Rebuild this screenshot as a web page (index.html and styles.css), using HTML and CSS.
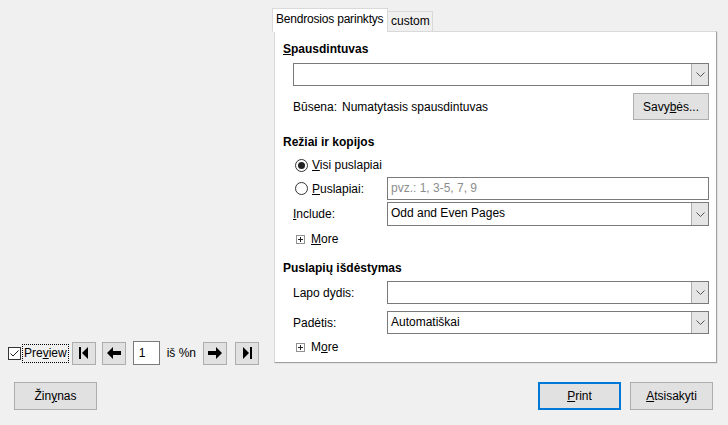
FILE: index.html
```html
<!DOCTYPE html>
<html>
<head>
<meta charset="utf-8">
<link rel="stylesheet" href="styles.css">
</head>
<body>
<div class="main">
  <div class="preview-col">
    <div class="navbar">
      <div class="chk">
        <svg class="box" width="13" height="13" viewBox="0 0 13 13"><rect x="0.5" y="0.5" width="12" height="12" fill="#fff" stroke="#333"/><path d="M2.5 6.5 L5 9 L10.5 3.5" fill="none" stroke="#222" stroke-width="1"/></svg>
        <span class="focus">Pre<u>v</u>iew</span>
      </div>
      <div class="nav first"><svg width="12" height="12" viewBox="0 0 12 12"><rect x="1" y="0" width="2" height="12"/><path d="M10 0 L10 12 L4 6 Z"/></svg></div>
      <div class="nav prev"><svg width="14" height="12" viewBox="0 0 14 12"><path d="M0 6 L6 0 L6 4 L14 4 L14 8 L6 8 L6 12 Z"/></svg></div>
      <div class="pagebox">1</div>
      <span class="of">iš %n</span>
      <div class="nav next"><svg width="14" height="12" viewBox="0 0 14 12"><path d="M14 6 L8 0 L8 4 L0 4 L0 8 L8 8 L8 12 Z"/></svg></div>
      <div class="nav last"><svg width="12" height="12" viewBox="0 0 12 12"><path d="M2 0 L2 12 L8 6 Z"/><rect x="9" y="0" width="2" height="12"/></svg></div>
    </div>
  </div>
  <div class="tabs-col">
    <div class="tabs">
      <div class="tab active">Bendrosios parinktys</div>
      <div class="tab">custom</div>
    </div>
    <div class="panel">
      <div class="title t1"><u>S</u>pausdintuvas</div>
      <div class="combo wide c1"><span class="val"></span><span class="drop"><svg width="9" height="5" viewBox="0 0 9 5"><path d="M0.5 0.5 L4.5 4.5 L8.5 0.5" fill="none" stroke="#555"/></svg></span></div>
      <div class="status">
        <span class="lbl-status">Būsena:</span>
        <span class="status-val">Numatytasis spausdintuvas</span>
        <div class="btn props">Savy<u>b</u>ės...</div>
      </div>
      <div class="title t2">Režiai ir kopijos</div>
      <div class="radio-row r1">
        <svg class="radio" width="13" height="13" viewBox="0 0 13 13"><circle cx="6.5" cy="6.5" r="6" fill="#fff" stroke="#333"/><circle cx="6.5" cy="6.5" r="3.5" fill="#222"/></svg>
        <span><u>V</u>isi puslapiai</span>
      </div>
      <div class="field-row r2">
        <div class="lbl radio-lbl">
          <svg class="radio" width="13" height="13" viewBox="0 0 13 13"><circle cx="6.5" cy="6.5" r="6" fill="#fff" stroke="#333"/></svg>
          <span><u>P</u>uslapiai:</span>
        </div>
        <div class="textbox"><span class="ph">pvz.: 1, 3-5, 7, 9</span></div>
      </div>
      <div class="field-row r3">
        <div class="lbl"><u>I</u>nclude:</div>
        <div class="combo"><span class="val">Odd and Even Pages</span><span class="drop"><svg width="9" height="5" viewBox="0 0 9 5"><path d="M0.5 0.5 L4.5 4.5 L8.5 0.5" fill="none" stroke="#555"/></svg></span></div>
      </div>
      <div class="more m1">
        <svg width="9" height="9" viewBox="0 0 9 9"><rect x="0.5" y="0.5" width="8" height="8" fill="#fff" stroke="#919191"/><path d="M2 4.5 H7 M4.5 2 V7" stroke="#222"/></svg>
        <span><u>M</u>ore</span>
      </div>
      <div class="title t3">Puslapių išdėstymas</div>
      <div class="field-row r4">
        <div class="lbl">Lapo dydis:</div>
        <div class="combo"><span class="val"></span><span class="drop"><svg width="9" height="5" viewBox="0 0 9 5"><path d="M0.5 0.5 L4.5 4.5 L8.5 0.5" fill="none" stroke="#555"/></svg></span></div>
      </div>
      <div class="field-row r5">
        <div class="lbl">Padėtis:</div>
        <div class="combo"><span class="val">Automatiškai</span><span class="drop"><svg width="9" height="5" viewBox="0 0 9 5"><path d="M0.5 0.5 L4.5 4.5 L8.5 0.5" fill="none" stroke="#555"/></svg></span></div>
      </div>
      <div class="more m2">
        <svg width="9" height="9" viewBox="0 0 9 9"><rect x="0.5" y="0.5" width="8" height="8" fill="#fff" stroke="#919191"/><path d="M2 4.5 H7 M4.5 2 V7" stroke="#222"/></svg>
        <span>M<u>o</u>re</span>
      </div>
    </div>
  </div>
</div>
<div class="footer">
  <div class="btn fbtn">Žin<u>y</u>nas</div>
  <div class="btn fbtn print"><u>P</u>rint</div>
  <div class="btn fbtn cancel"><u>A</u>tsisakyti</div>
</div>
</body>
</html>
```
FILE: styles.css
```css
* { box-sizing: border-box; }
html, body { margin: 0; padding: 0; }
body {
  width: 728px;
  height: 425px;
  background: #f0f0f0;
  font-family: "Liberation Sans", Arial, sans-serif;
  font-size: 12px;
  color: #000;
  overflow: hidden;
}
u { text-decoration: underline; text-underline-offset: 1px; }

.main { display: flex; height: 365px; }

/* preview column */
.preview-col {
  width: 272px;
  display: flex;
  flex-direction: column;
  justify-content: flex-end;
  padding-left: 8px;
}
.navbar { display: flex; align-items: center; height: 24px; }
.chk { display: flex; align-items: center; }
.chk .box { display: block; }
.focus {
  margin-left: 1px;
  padding: 1px 1px 2px 1px;
  border: 1px dotted #000;
  line-height: 14px;
}
.nav {
  width: 24px;
  height: 23px;
  background: #e1e1e1;
  border: 1px solid #adadad;
  display: flex;
  align-items: center;
  justify-content: center;
}
.nav svg { display: block; fill: #000; }
.nav.first { margin-left: 3px; }
.nav.prev { margin-left: 6px; }
.pagebox {
  margin-left: 7px;
  width: 27px;
  height: 24px;
  background: #fff;
  border: 1px solid #7a7a7a;
  padding-left: 5px;
  line-height: 22px;
}
.of { margin-left: 7px; width: 36px; }
.nav.next { margin-left: 0; }
.nav.last { margin-left: 8px; }

/* tabs */
.tabs-col { width: 446px; padding-top: 8px; }
.tabs { display: flex; align-items: flex-end; height: 23px; }
.tab {
  height: 20px;
  border: 1px solid #d9d9d9;
  border-bottom: none;
  background: #f0f0f0;
  padding: 0 3px;
  line-height: 19px;
  white-space: nowrap;
}
.tab.active {
  width: 116px;
  height: 24px;
  margin-bottom: -1px;
  background: #fff;
  position: relative;
  z-index: 1;
  padding: 2px 0 0 3px;
  line-height: 17px;
  letter-spacing: -0.2px;
  overflow: hidden;
}
.tab + .tab { border-left: none; width: 45px; }

.panel {
  margin-left: 2px;
  width: 443px;
  height: 332px;
  background: #fff;
  border: 1px solid #d9d9d9;
  border-right-color: #a0a0a0;
  border-bottom-color: #a0a0a0;
  box-shadow: 1px 1px 0 #e3e3e3;
  padding: 0 7px 0 8px;
  display: flex;
  flex-direction: column;
}
.title { font-weight: bold; height: 16px; line-height: 16px; }
.t1 { margin-top: 9px; }
.t2 { margin-top: 14px; }
.t3 { margin-top: 11px; }

.combo {
  flex: 1;
  height: 23px;
  border: 1px solid #7a7a7a;
  background: #fff;
  display: flex;
  align-items: stretch;
}
.combo .val { flex: 1; padding-left: 3px; line-height: 21px; }
.combo .drop {
  width: 17px;
  background: #e5e5e5;
  border-left: 1px solid #acacac;
  display: flex;
  align-items: center;
  justify-content: center;
}
.combo .drop svg { display: block; }
.combo.wide { flex: none; margin-left: 10px; margin-top: 6px; }

.status {
  margin-top: 7px;
  height: 27px;
  display: flex;
  align-items: center;
  padding-left: 10px;
}
.lbl-status { width: 49px; }
.status-val { flex: 1; }
.btn {
  background: #e1e1e1;
  border: 1px solid #adadad;
  display: flex;
  align-items: center;
  justify-content: center;
}
.props { width: 76px; height: 27px; }

.radio-row {
  margin-top: 5px;
  height: 20px;
  display: flex;
  align-items: center;
  padding-left: 12px;
}
.radio { display: block; margin-right: 4px; }
.field-row {
  display: flex;
  align-items: center;
  padding-left: 10px;
}
.field-row .lbl { width: 94px; }
.radio-lbl { display: flex; align-items: center; padding-left: 2px; }
.r2 { margin-top: 2px; height: 23px; }
.r3 { margin-top: 2px; height: 24px; }
.r3 .combo { height: 24px; }
.r4 { margin-top: 5px; height: 23px; }
.r5 { margin-top: 7px; height: 23px; }
.textbox {
  flex: 1;
  height: 23px;
  border: 1px solid #7a7a7a;
  background: #fff;
  padding-left: 3px;
  line-height: 21px;
}
.ph { color: #8d8d8d; }

.more {
  height: 20px;
  display: flex;
  align-items: center;
  padding-left: 13px;
}
.more svg { display: block; margin-right: 6px; }
.m1 { margin-top: 3px; }
.m2 { margin-top: 3px; }

/* footer */
.footer {
  display: flex;
  padding: 0 15px 0 14px;
  margin-top: 17px;
}
.fbtn { width: 83px; height: 28px; }
.print { margin-left: auto; border: 2px solid #0078d7; }
.cancel { margin-left: 9px; }
```
